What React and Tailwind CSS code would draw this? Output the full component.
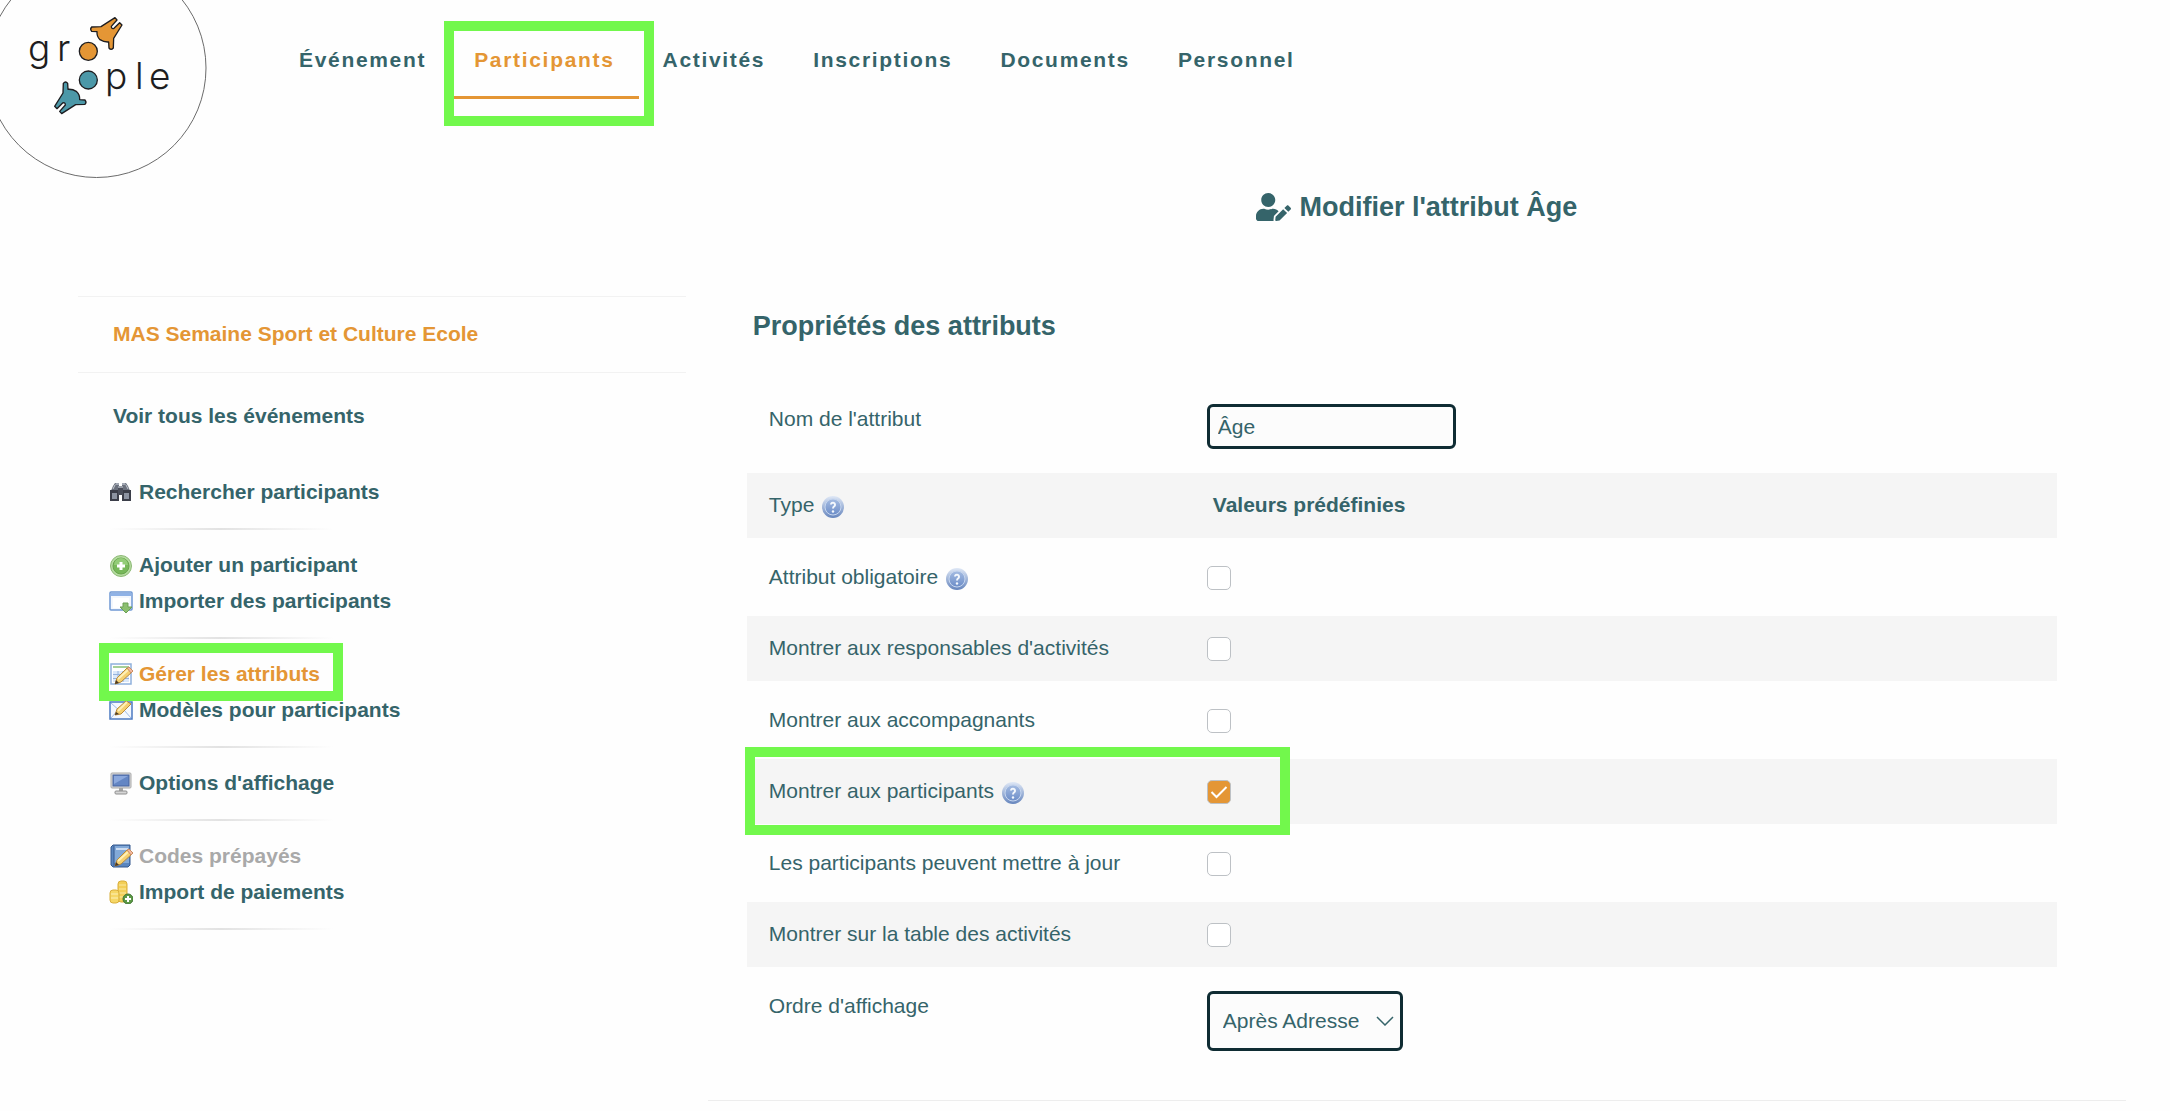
import { useState } from 'react'
import { FaUserEdit } from 'react-icons/fa'

const NAV = ['Événement', 'Participants', 'Activités', 'Inscriptions', 'Documents', 'Personnel']

// Sidebar groups, a faded rule is drawn after each one
const MENU = [
  [{ label: 'Rechercher participants', icon: BinocularsIcon }],
  [
    { label: 'Ajouter un participant', icon: AddIcon },
    { label: 'Importer des participants', icon: ImportIcon },
  ],
  [
    { label: 'Gérer les attributs', icon: TableEditIcon, active: true },
    { label: 'Modèles pour participants', icon: MailEditIcon },
  ],
  [{ label: "Options d'affichage", icon: MonitorIcon }],
  [
    { label: 'Codes prépayés', icon: BookEditIcon, disabled: true },
    { label: 'Import de paiements', icon: CoinsIcon },
  ],
]

function Logo() {
  const hand =
    'M275 81 Q269 87 275 94 L291 95 Q290 110 300 119 Q312 127 326 126 L327 144 Q333 152 340 144 L341 115 L366 75 L359 68 L342 85 Q334 88 334 79 L351 60 L345 53 L303 80 Z'
  return (
    <svg width="210" height="180" viewBox="0 0 210 180" className="shrink-0" role="img" aria-label="groople">
      <circle cx="96.5" cy="68" r="109.5" fill="none" stroke="#6b6b6b" strokeWidth="1" />
      <g transform="scale(0.3333)" stroke="#1d1d20" strokeWidth="4" strokeLinejoin="round">
        <path d={hand} fill="#e49635" />
        <circle cx="265" cy="154" r="27" fill="#e49635" />
        <path d={hand} fill="#4c98a8" transform="rotate(180 265 197)" />
        <circle cx="265" cy="240" r="27" fill="#4c98a8" />
      </g>
      <g fill="#1d1d20" fontFamily="Inter, sans-serif" fontWeight="300" fontSize="37">
        <text x="28 57" y="61">gr</text>
        <text x="105 135 149" y="89">ple</text>
      </g>
    </svg>
  )
}

function Icon({ children }) {
  return (
    <svg width="24" height="24" viewBox="0 0 24 24" className="shrink-0" aria-hidden="true">
      {children}
    </svg>
  )
}

function Pencil() {
  return (
    <g strokeLinejoin="round">
      <path d="M6 22 L8 16 L18 6 L23 10 L12 20 Z" fill="#f5d070" stroke="#b98a3c" />
      <path d="M9 17 L19 8" stroke="#fdf0b8" strokeWidth="2" />
      <path d="M18 6 L20 5 L24 9 L22 11 Z" fill="#f3b9a0" stroke="#c98d62" />
      <path d="M6 22 L7 18 L10 21 Z" fill="#4a3a26" />
    </g>
  )
}

function BinocularsIcon() {
  return (
    <Icon>
      <path d="M6 3h4v3h3V3h4l2 3 3 7H1l3-7z" fill="#6a707c" />
      <path d="M7 3h3v2H6zM13 3h3l1 2h-4z" fill="#a3a9b4" />
      <path d="M1 10h9v11H1zM13 10h9v11h-9z" fill="#3b3e49" />
      <path d="M3 13h5v6H3zM15 13h5v6h-5z" fill="#8c93a1" />
      <path d="M9 8h5v7H9z" fill="#4a4e5a" />
      <path d="M4 9l2-4M17 5l2 4M9 7h5" stroke="#c3c8d0" />
    </Icon>
  )
}

function AddIcon() {
  return (
    <Icon>
      <circle cx="12" cy="13" r="10.500" fill="#b5dba0" stroke="#8dba76" strokeWidth="1" />
      <circle cx="12" cy="13" r="8" fill="#77b85a" stroke="#68a54c" strokeWidth="1" />
      <path d="M5 12a7 7 0 0 1 14 0z" fill="#93cc78" />
      <path d="M12 9v8M8 13h8" stroke="#fff" strokeWidth="3" />
    </Icon>
  )
}

function ImportIcon() {
  return (
    <Icon>
      <rect x="1" y="3" width="22" height="18" rx="1" fill="#f3f7fd" stroke="#6f98d3" strokeWidth="1.5" />
      <path d="M2 4h20v3H2z" fill="#8fb2e6" />
      <path d="M4 9h16v10H4z" fill="#fff" />
      <path d="M14 14h5v4h4l-6 6-6-6h3z" fill="#8cbf70" stroke="#6a9f55" />
    </Icon>
  )
}

function TableEditIcon() {
  return (
    <Icon>
      <rect x="2" y="2" width="20" height="20" fill="#fff" stroke="#8fb0dc" strokeWidth="1.5" />
      <path d="M4 4h16v2H4z" fill="#a5cf98" />
      <path d="M4 9h16v11H4z" fill="#dbe8f9" />
      <path d="M4 12.500h16M4 16.500h16M9 9v11M14 9v11" stroke="#94b3dd" />
      <Pencil />
    </Icon>
  )
}

function MailEditIcon() {
  return (
    <Icon>
      <rect x="1" y="4" width="22" height="17" fill="#f4f8fe" stroke="#4b79c1" strokeWidth="1.5" />
      <path d="M2 5l10 9 10-9M2 20l7-8M22 20l-7-8" fill="none" stroke="#9dbbe8" />
      <path d="M6 17l2-6 9-8 5 3-10 10z" fill="#f5d070" stroke="#b98a3c" />
      <path d="M9 13l9-9" stroke="#fdf0b8" strokeWidth="2" />
      <path d="M6 17l1-3 3 2z" fill="#4a3a26" />
    </Icon>
  )
}

function MonitorIcon() {
  return (
    <Icon>
      <rect x="2" y="2" width="20" height="15" rx="1" fill="#dcdcdc" stroke="#a9a9a9" />
      <rect x="4" y="4" width="16" height="11" fill="#6486c4" stroke="#48659f" />
      <path d="M5 5h14l-14 8z" fill="#8ba8dd" />
      <path d="M10 17h4v3h-4z" fill="#a5a5a5" />
      <rect x="6" y="20" width="12" height="3" rx="1" fill="#d6d6d6" stroke="#8e8e8e" />
    </Icon>
  )
}

function BookEditIcon() {
  return (
    <Icon>
      <path d="M4 1h17v20l-2 2H4l-2-2V3z" fill="#5a86bf" stroke="#34598e" />
      <path d="M5 2h15v17H5z" fill="#82a9d8" />
      <path d="M5 2v20" stroke="#34598e" />
      <path d="M7 5h12" stroke="#e4eefa" strokeWidth="1.500" />
      <Pencil />
    </Icon>
  )
}

function CoinsIcon() {
  return (
    <Icon>
      <rect x="9" y="1" width="9" height="21" rx="3" fill="#f3cf57" stroke="#d9ae3b" />
      <path d="M10 5h7M10 9h7M10 13h7M10 17h7" stroke="#fbe9a2" />
      <rect x="1" y="10" width="9" height="13" rx="3" fill="#f6d766" stroke="#d9ae3b" />
      <path d="M2 14h7M2 18h7" stroke="#fdf0b8" />
      <circle cx="19" cy="19" r="5" fill="#5c9a45" stroke="#3f7431" />
      <path d="M19 16v6M16 19h6" stroke="#fff" strokeWidth="2" />
    </Icon>
  )
}

function HelpButton({ topic }) {
  return (
    <button type="button" aria-label={`Aide : ${topic}`} className="mt-[6px] ml-2 size-[22px] shrink-0">
      <svg width="22" height="22" viewBox="0 0 22 22" aria-hidden="true">
        <defs>
          <linearGradient id="help-ring" x1="0" y1="0" x2="0" y2="1">
            <stop offset="0" stopColor="#dfe8f6" />
            <stop offset="1" stopColor="#6585bd" />
          </linearGradient>
          <linearGradient id="help-disc" x1="0" y1="0" x2="0" y2="1">
            <stop offset="0" stopColor="#a5bce2" />
            <stop offset="1" stopColor="#6c8dc8" />
          </linearGradient>
        </defs>
        <circle cx="11" cy="11" r="11" fill="url(#help-ring)" />
        <circle cx="11" cy="11" r="8" fill="url(#help-disc)" stroke="#c6d6ef" />
        <path d="M9 8.500a2 2 0 1 1 3.500 1.500Q11 11 11 12.500" fill="none" stroke="#f4f8fd" strokeWidth="2" />
        <circle cx="11" cy="15.500" r="1.200" fill="#f4f8fd" />
      </svg>
    </button>
  )
}

function Highlight({ className }) {
  return <span className={`pointer-events-none absolute z-10 border-[10px] border-[#72f84c] ${className}`} />
}

function Header() {
  return (
    <header className="flex items-start">
      <Logo />
      <nav className="mt-[45px] ml-[65px] flex text-[21px] leading-[30px] font-bold tracking-[0.08em]">
        {NAV.map((label) => {
          const active = label === 'Participants'
          return (
            <div key={label} className="relative">
              <a
                href="#"
                className={`block border-b-[3px] px-6 pb-[21px] ${active ? 'border-[#e49635] text-[#e49635]' : 'border-transparent'}`}
              >
                {label}
              </a>
              {active ? <Highlight className="-top-6 -right-[15px] -bottom-[27px] -left-[6px]" /> : null}
            </div>
          )
        })}
      </nav>
    </header>
  )
}

function Sidebar() {
  return (
    <aside className="mt-[116px] text-[21px] leading-9 font-bold">
      <div className="border-y border-[#f2f2f2] pt-[19px] pb-5 pl-[35px] text-[#e49635]">
        MAS Semaine Sport et Culture Ecole
      </div>
      <a href="#" className="mt-[25px] block pl-[35px]">Voir tous les événements</a>
      <div className="mt-10 pl-[31px]">
        {MENU.map((group, i) => (
          <div key={i}>
            {group.map(({ label, icon: ItemIcon, active, disabled }) => (
              <div key={label} className="relative w-fit">
                <a
                  href="#"
                  aria-disabled={disabled}
                  className={`flex items-center gap-[6px] ${active ? 'text-[#e49635]' : ''} ${disabled ? 'text-[#a9a9a9]' : ''}`}
                >
                  <ItemIcon />
                  {label}
                </a>
                {active ? <Highlight className="-top-[13px] -right-[23px] -bottom-[9px] -left-[10px]" /> : null}
              </div>
            ))}
            <div className="flex h-[37px] items-center">
              <div className="h-[2px] w-[224px] bg-linear-to-r from-transparent via-[#e2e2e2] to-transparent" />
            </div>
          </div>
        ))}
      </div>
    </aside>
  )
}

function Row({ id, label, help, shaded, highlighted, children }) {
  return (
    <div className={`relative flex items-start py-[17px] ${shaded ? 'min-h-[65px] bg-[#f5f5f5]' : ''}`}>
      <div className="flex w-[460px] shrink-0 pl-[22px]">
        {id ? <label htmlFor={id}>{label}</label> : <span>{label}</span>}
        {help ? <HelpButton topic={label} /> : null}
      </div>
      {children}
      {highlighted ? <Highlight className="-top-3 -bottom-[11px] -left-[2px] w-[545px]" /> : null}
    </div>
  )
}

function CheckRow({ id, checked = false, ...row }) {
  const [on, setOn] = useState(checked)
  return (
    <Row id={id} {...row}>
      <div className="mt-1 grid size-6">
        <input
          id={id}
          type="checkbox"
          checked={on}
          onChange={(e) => setOn(e.target.checked)}
          className="col-start-1 row-start-1 size-6 appearance-none rounded-[5px] border border-[#bdc1c5] bg-white checked:bg-[#e49635]"
        />
        {on ? (
          <svg viewBox="0 0 24 24" className="pointer-events-none col-start-1 row-start-1 size-6" aria-hidden="true">
            <path d="M4.500 12l5 5L19.500 7" fill="none" stroke="#fff" strokeWidth="2" />
          </svg>
        ) : null}
      </div>
    </Row>
  )
}

function AttributeForm() {
  const [name, setName] = useState('Âge')
  return (
    <form className="mt-[41px] flex flex-col gap-[7px] text-[21px] leading-[30px]">
      <Row id="name" label="Nom de l'attribut">
        <input
          id="name"
          type="text"
          value={name}
          onChange={(e) => setName(e.target.value)}
          className="h-[45px] w-[249px] rounded-md border-[3px] border-[#0f2c33] bg-[#fcfcfc] px-2"
        />
      </Row>
      <Row label="Type" help shaded>
        <strong className="pl-[6px]">Valeurs prédéfinies</strong>
      </Row>
      <CheckRow id="required" label="Attribut obligatoire" help />
      <CheckRow id="managers" label="Montrer aux responsables d'activités" shaded />
      <CheckRow id="escorts" label="Montrer aux accompagnants" />
      <CheckRow id="participants" label="Montrer aux participants" help shaded checked highlighted />
      <CheckRow id="update" label="Les participants peuvent mettre à jour" />
      <CheckRow id="table" label="Montrer sur la table des activités" shaded />
      <Row id="order" label="Ordre d'affichage">
        <div className="relative">
          <select
            id="order"
            className="h-[60px] w-[196px] appearance-none rounded-md border-[3px] border-[#0f2c33] bg-[#fcfcfc] pl-[13px]"
          >
            <option>Après Adresse</option>
          </select>
          <svg
            viewBox="0 0 18 10"
            className="pointer-events-none absolute top-[25px] right-[9px] h-[10px] w-[18px]"
            aria-hidden="true"
          >
            <path d="M1 1l8 8 8-8" fill="none" stroke="#35646a" strokeWidth="1.500" />
          </svg>
        </div>
      </Row>
    </form>
  )
}

export default function App() {
  return (
    <div className="min-h-screen bg-[#fefefe] font-['Liberation_Sans',Arial,sans-serif] text-[#35646a]">
      <Header />
      <div className="grid grid-cols-[3fr_7fr] gap-[22px] pr-11 pl-[78px]">
        <Sidebar />
        <main>
          <h1 className="flex items-center justify-center gap-2 pt-[7px] text-[27px] leading-10 font-bold">
            <FaUserEdit className="h-7 w-[35px]" />
            Modifier l'attribut Âge
          </h1>
          <div className="mt-[79px] border-b border-[#ededed] pr-[69px] pb-8 pl-[39px]">
            <h2 className="pl-[6px] text-[27px] leading-10 font-bold">Propriétés des attributs</h2>
            <AttributeForm />
          </div>
        </main>
      </div>
    </div>
  )
}
